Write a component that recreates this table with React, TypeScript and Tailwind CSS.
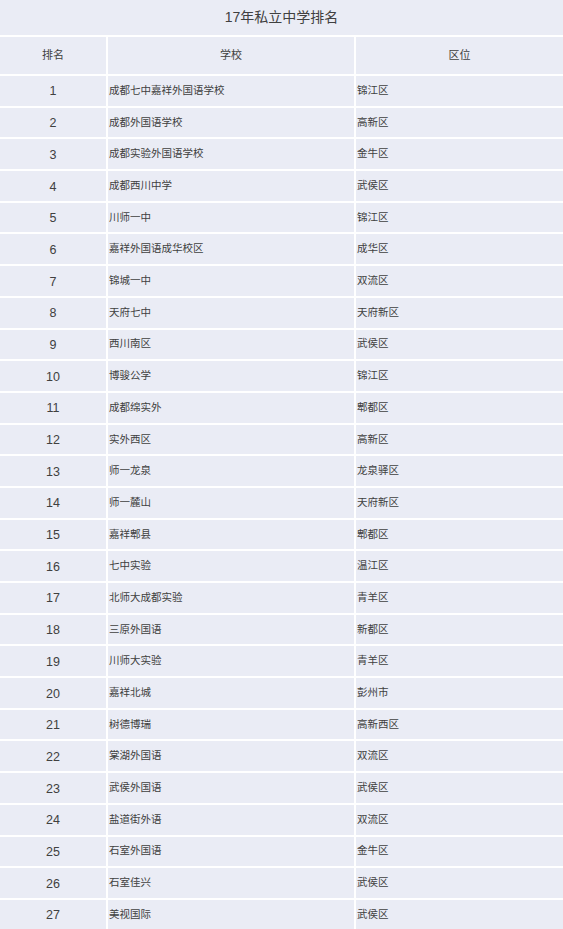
import React from "react";

const rows: [string, string][] = [
  ["成都七中嘉祥外国语学校", "锦江区"],
  ["成都外国语学校", "高新区"],
  ["成都实验外国语学校", "金牛区"],
  ["成都西川中学", "武侯区"],
  ["川师一中", "锦江区"],
  ["嘉祥外国语成华校区", "成华区"],
  ["锦城一中", "双流区"],
  ["天府七中", "天府新区"],
  ["西川南区", "武侯区"],
  ["博骏公学", "锦江区"],
  ["成都绵实外", "郫都区"],
  ["实外西区", "高新区"],
  ["师一龙泉", "龙泉驿区"],
  ["师一麓山", "天府新区"],
  ["嘉祥郫县", "郫都区"],
  ["七中实验", "温江区"],
  ["北师大成都实验", "青羊区"],
  ["三原外国语", "新都区"],
  ["川师大实验", "青羊区"],
  ["嘉祥北城", "彭州市"],
  ["树德博瑞", "高新西区"],
  ["棠湖外国语", "双流区"],
  ["武侯外国语", "武侯区"],
  ["盐道街外语", "双流区"],
  ["石室外国语", "金牛区"],
  ["石室佳兴", "武侯区"],
  ["美视国际", "武侯区"],
];

export default function App() {
  return (
    <div
      className="w-[563px] h-[929px] overflow-hidden bg-white text-[#404040]"
      style={{ fontFamily: '"Liberation Sans", "Noto Sans CJK SC", sans-serif' }}
    >
      <div className="grid grid-cols-[106px_246px_1fr] gap-[2px] bg-white">
        <div className="col-span-3 h-[35px] bg-[#eaecf5] flex items-center justify-center text-[14px]">
          17年私立中学排名
        </div>
        <div className="h-[37px] bg-[#eaecf5] flex items-center justify-center text-[11px]">排名</div>
        <div className="h-[37px] bg-[#eaecf5] flex items-center justify-center text-[11px]">学校</div>
        <div className="h-[37px] bg-[#eaecf5] flex items-center justify-center text-[11px]">区位</div>
        {rows.map(([school, area], i) => (
          <React.Fragment key={i}>
            <div className="h-[29.7px] bg-[#eaecf5] flex items-center justify-center pt-[2px] text-[12.5px]">
              {i + 1}
            </div>
            <div className="h-[29.7px] bg-[#eaecf5] flex items-center pl-[1px] text-[10.5px]">
              {school}
            </div>
            <div className="h-[29.7px] bg-[#eaecf5] flex items-center pl-[1px] text-[10.5px]">
              {area}
            </div>
          </React.Fragment>
        ))}
      </div>
    </div>
  );
}
